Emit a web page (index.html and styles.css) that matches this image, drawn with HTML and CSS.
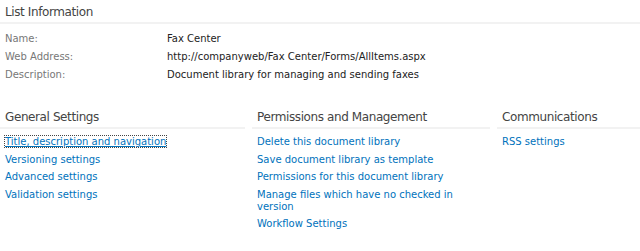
FILE: index.html
```html
<!DOCTYPE html>
<html lang="en">
<head>
    <meta charset="UTF-8">
    <title>List Settings</title>
    <link rel="stylesheet" href="styles.css">
</head>
<body>

<div id="listinfo">
    <div class="heading">List Information</div>
    <table class="info">
        <tr>
            <td class="label">Name:</td>
            <td class="value">Fax Center</td>
        </tr>
        <tr>
            <td class="label">Web Address:</td>
            <td class="value">http://companyweb/Fax Center/Forms/AllItems.aspx</td>
        </tr>
        <tr>
            <td class="label">Description:</td>
            <td class="value">Document library for managing and sending faxes</td>
        </tr>
    </table>
</div>

<div id="settings">
    <div class="column">
        <div class="heading">General Settings</div>
        <ul>
            <li><a href="#" class="focused">Title, description and navigation</a></li>
            <li><a href="#">Versioning settings</a></li>
            <li><a href="#">Advanced settings</a></li>
            <li><a href="#">Validation settings</a></li>
        </ul>
    </div>
    <div class="column">
        <div class="heading">Permissions and Management</div>
        <ul>
            <li><a href="#">Delete this document library</a></li>
            <li><a href="#">Save document library as template</a></li>
            <li><a href="#">Permissions for this document library</a></li>
            <li><a href="#">Manage files which have no checked in version</a></li>
            <li><a href="#">Workflow Settings</a></li>
        </ul>
    </div>
    <div class="column">
        <div class="heading">Communications</div>
        <ul>
            <li><a href="#">RSS settings</a></li>
        </ul>
    </div>
</div>

</body>
</html>
```

FILE: styles.css
```css
body {
    margin: 0;
    font-family: "DejaVu Sans", Verdana, sans-serif;
    font-size: 10px;
    color: #333;
    background: #fff;
}

.heading {
    font-size: 12px;
    line-height: 14px;
    letter-spacing: -0.4px;
    color: #444;
    padding: 5px 5px 3px 5px;
    border-bottom: 2px solid #f2f2f2;
}

#listinfo {
    margin-bottom: 21px;
}

.info {
    border-collapse: collapse;
    margin-top: 6px;
}
.info td {
    padding: 2px 5px 3px 5px;
    height: 13px;
}
.label {
    width: 152px;
    color: #777;
}
.value {
    color: #222;
}

#settings {
    display: grid;
    grid-template-columns: 245px 238px 1fr;
    column-gap: 7px;
}

ul {
    list-style-type: none;
    margin: 4px 0 0 0;
    padding: 0;
}
li {
    line-height: 12px;
    padding: 3px 5px 2.5px 5px;
}
li a {
    color: #0072bc;
    text-decoration: none;
}
a.focused {
    outline: 1px dotted #444;
    text-decoration: underline;
}
```
